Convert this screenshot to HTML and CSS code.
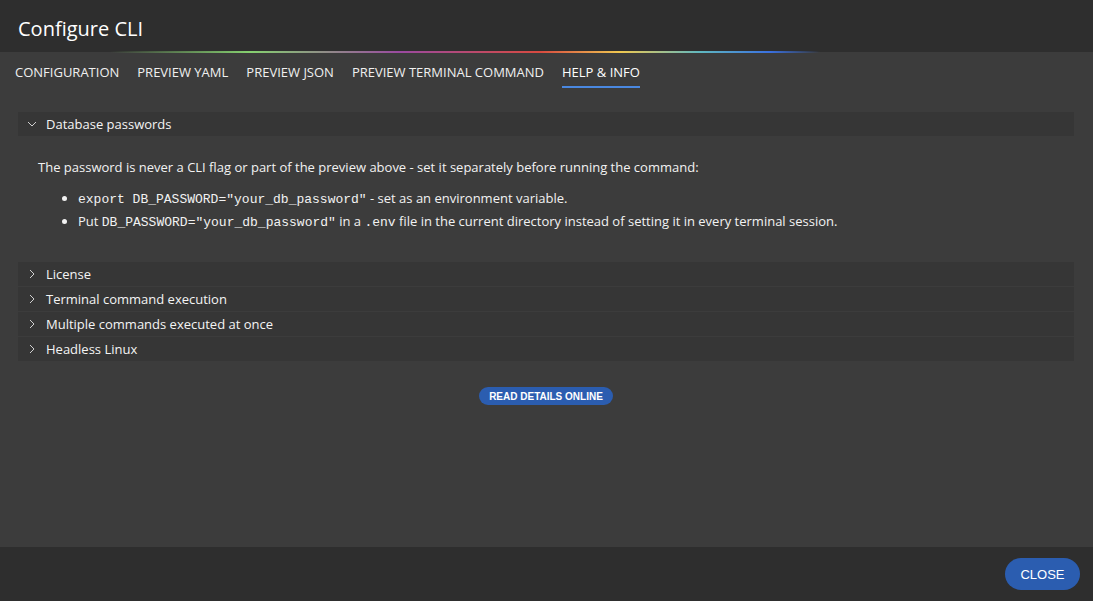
FILE: index.html
```html
<!DOCTYPE html>
<html lang="en">
<head>
<meta charset="UTF-8" />
<meta name="viewport" content="width=device-width, initial-scale=1" />
<title>Configure CLI</title>
<link rel="stylesheet" href="styles.css">
</head>
<body>

<div class="dialog">
  <header class="dialog-header">
    <h1>Configure CLI</h1>
  </header>

  <nav class="tabs">
    <a class="tab">Configuration</a>
    <a class="tab">Preview YAML</a>
    <a class="tab">Preview JSON</a>
    <a class="tab">Preview terminal command</a>
    <a class="tab active">Help &amp; Info</a>
  </nav>

  <main class="dialog-body">
    <section class="panel open">
      <div class="panel-head">
        <svg class="chev" viewBox="0 0 12 12"><path d="M2 4 L6 8 L10 4" /></svg>
        <span>Database passwords</span>
      </div>
      <div class="panel-content">
        <p>The password is never a CLI flag or part of the preview above - set it separately before running the command:</p>
        <ul>
          <li><code>export DB_PASSWORD="your_db_password"</code> - set as an environment variable.</li>
          <li>Put <code>DB_PASSWORD="your_db_password"</code> in a <code>.env</code> file in the current directory instead of setting it in every terminal session.</li>
        </ul>
      </div>
    </section>

    <div class="panel-list">
      <section class="panel">
        <div class="panel-head">
          <svg class="chev" viewBox="0 0 12 12"><path d="M4 2 L8 6 L4 10" /></svg>
          <span>License</span>
        </div>
      </section>
      <section class="panel">
        <div class="panel-head">
          <svg class="chev" viewBox="0 0 12 12"><path d="M4 2 L8 6 L4 10" /></svg>
          <span>Terminal command execution</span>
        </div>
      </section>
      <section class="panel">
        <div class="panel-head">
          <svg class="chev" viewBox="0 0 12 12"><path d="M4 2 L8 6 L4 10" /></svg>
          <span>Multiple commands executed at once</span>
        </div>
      </section>
      <section class="panel">
        <div class="panel-head">
          <svg class="chev" viewBox="0 0 12 12"><path d="M4 2 L8 6 L4 10" /></svg>
          <span>Headless Linux</span>
        </div>
      </section>
    </div>

    <div class="online">
      <button class="btn-small">READ DETAILS ONLINE</button>
    </div>
  </main>

  <footer class="dialog-footer">
    <button class="btn-close">CLOSE</button>
  </footer>
</div>

</body>
</html>
```

FILE: styles.css
```css
body { margin: 0; font-family: "Open Sans", sans-serif; background: #3c3c3c; color: #f2f2f2; }
.dialog { display: flex; flex-direction: column; height: 601px; }

.dialog-header { height: 52px; background: #2e2e2e; display: flex; align-items: center; padding-left: 18px; position: relative; }
.dialog-header h1 { margin: 4px 0 0; font-size: 20px; font-weight: 400; color: #fff; }
.dialog-header::after {
  content: ""; position: absolute; left: 0; right: 0; bottom: -1px; height: 2px;
  background: linear-gradient(90deg, rgba(0,0,0,0) 110px, #86d070 250px, #9a4aa0 400px, #d84a40 540px,
    #f0c850 620px, #60b8c0 700px, #3a70e0 770px, rgba(0,0,0,0) 820px);
}

.tabs { display: flex; gap: 18px; padding: 0 15px; height: 43px; align-items: flex-start; background: #3c3c3c; }
.tab {
  font-size: 13px; text-transform: uppercase; color: #f0f0f0; display: flex; align-items: center;
  padding-top: 5px; cursor: pointer; border-bottom: 2px solid transparent; box-sizing: border-box; height: 36px;
}
.tab.active { border-bottom-color: #4a88e0; color: #fff; }

.dialog-body { flex: 1; padding: 17px 19px 0 18px; }

.panel-head { height: 24px; background: #363636; display: flex; align-items: center; font-size: 13px; color: #f4f4f4; }
.panel-head span { margin-left: 8px; }
.chev { width: 12px; height: 12px; margin-left: 8px; fill: none; stroke: #d0d0d0; stroke-width: 1; }

.panel-content { padding: 22px 20px 27px; font-size: 13px; }
.panel-content p { margin: 0 0 13px; line-height: 18px; }
.panel-content ul { margin: 0; padding-left: 40px; }
.panel-content li { line-height: 18px; margin-bottom: 5px; }
.panel-content code { font-family: "Liberation Mono", monospace; font-size: 13px; line-height: 1; }

.panel-list { display: flex; flex-direction: column; gap: 1px; }

.online { display: flex; justify-content: center; margin-top: 26px; }
.btn-small {
  font-family: "Liberation Sans", Arial, sans-serif; font-size: 10px; font-weight: 700; color: #fff;
  background: #2b5db0; border: none; border-radius: 9px; height: 18px; padding: 0 10px; cursor: pointer;
}

.dialog-footer { height: 54px; background: #2e2e2e; display: flex; align-items: center; justify-content: flex-end; padding-right: 13px; }
.btn-close {
  font-family: "Liberation Sans", Arial, sans-serif; font-size: 13px; color: #fff; background: #2b5db0;
  border: none; border-radius: 16px; width: 75px; height: 32px; cursor: pointer;
}
```
